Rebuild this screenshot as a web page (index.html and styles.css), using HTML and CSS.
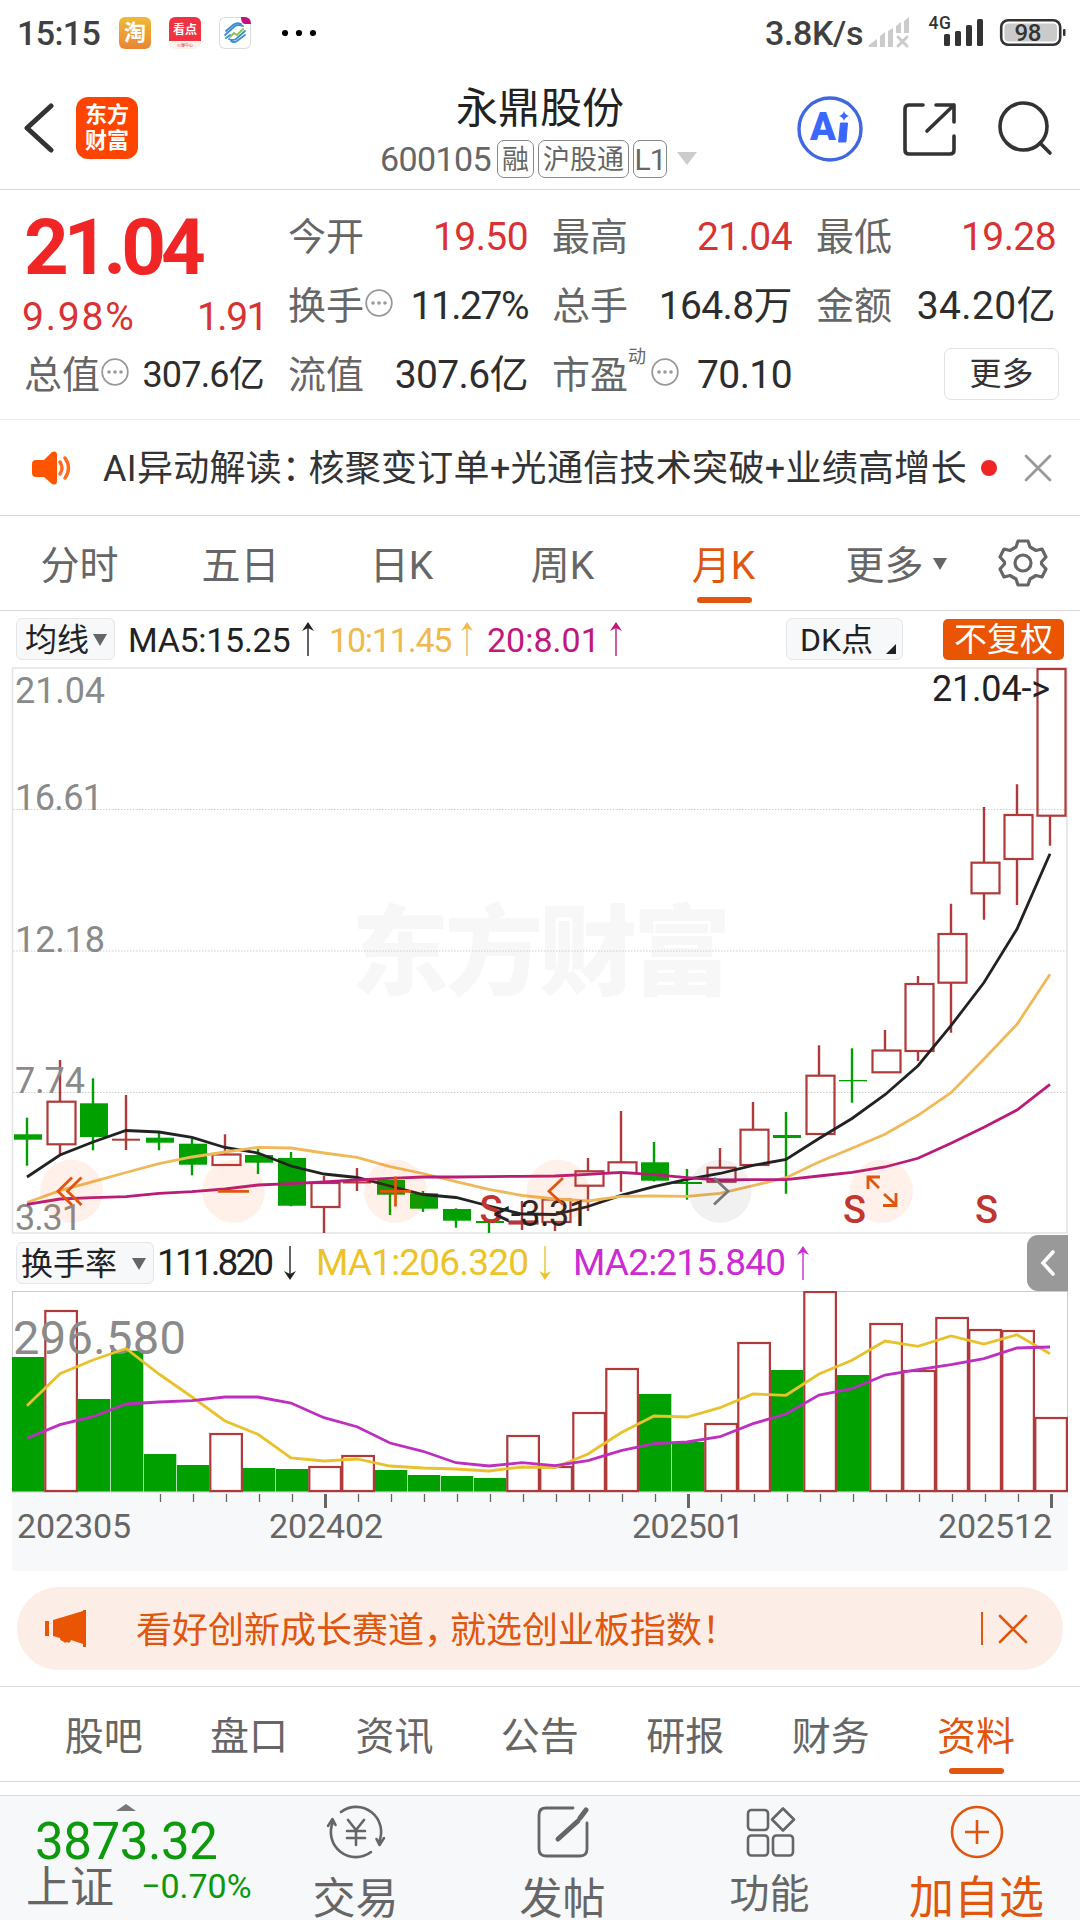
FILE: index.html
```html
<!DOCTYPE html>
<html lang="zh-CN">
<head>
  <meta charset="UTF-8">
  <meta name="viewport" content="width=device-width, initial-scale=1.0">
  <title>永鼎股份 600105</title>
  <link rel="stylesheet" href="styles.css">
</head>
<body>

  <div class="status-bar">
    <span class="time">15:15</span>
    <span class="app-icon taobao">淘</span>
    <span class="app-icon kandian"><b>看点</b><i>火爆中心</i></span>
    <span class="app-icon mobile">
      <svg width="32" height="32" viewBox="0 0 32 32">
        <path d="M22 0h5q5 0 5 6v1H26q-4 0-4-7z" fill="#c0137c"/>
        <g fill="none" stroke-width="1.800" stroke-linecap="round">
          <path d="M7 14l7-6q4-3 8-1M6 18l10-9q4-2 8 0M7 21l4-3" stroke="#3b8fd0"/>
          <path d="M11 20l4-4 3 2 6-6" stroke="#8cc152"/>
          <path d="M26 14l-9 8q-4 2-7 0M26 18l-8 6q-3 2-6 0" stroke="#3b8fd0"/>
        </g>
      </svg>
    </span>
    <svg class="dots" width="34" height="8" viewBox="0 0 34 8">
      <circle cx="3" cy="4" r="3.1"/><circle cx="17" cy="4" r="3.1"/><circle cx="31" cy="4" r="3.1"/>
    </svg>
    <span class="speed">3.8K/s</span>
    <svg class="system" width="204" height="34" viewBox="866 16 204 34">
      <g fill="#cbcbcb">
        <path d="M869 47v-2l8-6v8zM880 47V36l5-4v15zM888 47V31l5-3v19zM896 33v-7l5-4v11zM904 33V21l5-4v16z"/>
        <path d="M898 37l9 9M907 37l-9 9" stroke="#cbcbcb" stroke-width="3" stroke-linecap="round"/>
      </g>
      <text x="928.500" y="29" font-size="17.500" font-weight="500" textLength="22.500" fill="#333">4G</text>
      <g fill="#333">
        <rect x="944" y="34" width="6" height="12" rx="1.5"/>
        <rect x="955" y="31" width="6" height="15" rx="1.5"/>
        <rect x="966" y="25" width="6" height="21" rx="1.5"/>
        <rect x="977" y="19" width="6" height="27" rx="1.5"/>
        <rect x="1063" y="29" width="2.5" height="7" rx="1"/>
      </g>
      <rect x="1001.2" y="20.2" width="59" height="24.6" rx="7" fill="#fff" stroke="#333" stroke-width="2.6"/>
      <rect x="1004.5" y="23.5" width="52.5" height="18" rx="4" fill="#cacaca"/>
      <text x="1014.5" y="41" font-size="24" font-weight="500" textLength="27" fill="#333">98</text>
    </svg>
  </div>

  <header class="header">
    <svg class="back" width="32" height="52" viewBox="0 0 32 52"><path d="M29 4L5 26l24 22" fill="none" stroke="#333" stroke-width="5" stroke-linecap="round" stroke-linejoin="round"/></svg>
    <div class="logo">东方<br>财富</div>
    <div class="title">
      <div class="name">永鼎股份</div>
      <div class="code">
        <span class="num">600105</span>
        <span class="badge">融</span><span class="badge">沪股通</span><span class="badge level">L1</span>
        <svg width="20" height="13" viewBox="0 0 20 13"><path d="M0 0h20L10 13z" fill="#ccc"/></svg>
      </div>
    </div>
    <div class="actions">
      <svg width="66" height="68" viewBox="798 94 66 68">
        <circle cx="831" cy="128" r="31" fill="none" stroke="#3f68e0" stroke-width="3.4"/>
        <text x="811" y="139" class="ai-text">A</text>
        <path d="M841.500 122h7l-1.600 19h-7.300z" fill="#3a68ff" stroke="#3a68ff" stroke-width="1"/>
        <path d="M845 110q1 4 5 5-4 1-5 5-1-4-5-5 4-1 5-5z" fill="#3a68ff"/>
      </svg>
      <svg width="58" height="58" viewBox="901 99 58 58" fill="none" stroke="#333" stroke-width="3.6" stroke-linecap="round" stroke-linejoin="round">
        <path d="M924 104h-14q-4 0-4 4v41q0 4 4 4h41q4 0 4-4v-14M937 104h18v17M955 104l-27 26"/>
      </svg>
      <svg width="58" height="58" viewBox="995 99 58 58" fill="none" stroke="#333" stroke-width="3.6" stroke-linecap="round">
        <circle cx="1023.500" cy="125.500" r="23.500"/><path d="M1040 142l10 10"/>
      </svg>
    </div>
  </header>

  <section class="quote">
    <div class="price-cell">
      <div class="price">21.04</div>
      <div class="change"><span class="percent">9.98%</span><span class="diff">1.91</span></div>
    </div>
    <div class="item"><span>今开</span><b class="red">19.50</b></div>
    <div class="item"><span>最高</span><b class="red">21.04</b></div>
    <div class="item"><span>最低</span><b class="red">19.28</b></div>
    <div class="item"><span>换手<svg class="info" width="28" height="28" viewBox="0 0 28 28"><use href="#info"/></svg></span><b class="tight">11.27%</b></div>
    <div class="item"><span>总手</span><b>164.8万</b></div>
    <div class="item"><span>金额</span><b class="wide">34.20亿</b></div>
    <div class="item"><span>总值<svg class="info" width="28" height="28" viewBox="0 0 28 28"><use href="#info"/></svg></span><b class="small">307.6亿</b></div>
    <div class="item"><span>流值</span><b>307.6亿</b></div>
    <div class="item"><span>市盈<sup>动</sup><svg class="info" width="28" height="28" viewBox="0 0 28 28"><use href="#info"/></svg></span><b>70.10</b></div>
    <div class="item"><button class="more">更多</button></div>
  </section>

  <section class="news">
    <svg width="42" height="34" viewBox="0 0 42 34">
      <path d="M4 9h8L20 1q5-2 5 3v26q0 5-5 3l-8-7H4q-4 0-4-4v-9q0-4 4-4z" fill="#ff5500"/>
      <path d="M28 11q4 6 0 12M33 7q7 10 0 20" fill="none" stroke="#ff6a1f" stroke-width="3.4" stroke-linecap="round"/>
    </svg>
    <span class="news-text">AI异动解读<i class="punct">：</i>核聚变订单+光通信技术突破+业绩高增长</span>
    <i class="red-dot"></i>
    <svg width="28" height="28" viewBox="0 0 28 28"><path d="M2 2l24 24M26 2L2 26" stroke="#999" stroke-width="2.800" stroke-linecap="round"/></svg>
  </section>

  <nav class="period-tabs">
    <span>分时</span>
    <span>五日</span>
    <span>日K</span>
    <span>周K</span>
    <span class="active">月K</span>
    <span class="more-tab">更多<svg class="tab-caret" width="14" height="12" viewBox="0 0 14 12"><path d="M0 0h14L7 12z" fill="#666"/></svg></span>
    <span class="gear">
      <svg width="50" height="50" viewBox="-25 -25 50 50" fill="none" stroke="#666" stroke-width="3.2" stroke-linejoin="round">
        <path d="M-5-22H5l2 6 6 3.500 6-1.500 4 8-4.500 5v2l4.500 5-4 8-6-1.500-6 3.500-2 6H-5l-2-6-6-3.500-6 1.500-4-8 4.500-5v-2L-23-6l4-8 6 1.500 6-3.500z"/>
        <circle r="8"/>
      </svg>
    </span>
  </nav>

  <div class="ma-row">
    <span class="tag">均线<svg width="14" height="12" viewBox="0 0 14 12"><path d="M0 0h14L7 12z" fill="#666"/></svg></span>
    <span class="ma ma5">MA5:15.25</span>
    <svg class="arrow black" width="12" height="34" viewBox="0 0 12 34"><use href="#up"/></svg>
    <span class="ma ma10">10:11.45</span>
    <svg class="arrow amber" width="12" height="34" viewBox="0 0 12 34"><use href="#up"/></svg>
    <span class="ma ma20">20:8.01</span>
    <svg class="arrow rose" width="12" height="34" viewBox="0 0 12 34"><use href="#up"/></svg>
    <span class="tag dk">DK点<svg width="10" height="10" viewBox="0 0 10 10"><path d="M10 0v10H0z" fill="#222"/></svg></span>
    <span class="fuquan">不复权</span>
  </div>

  <svg id="price-chart" width="1080" height="568" viewBox="0 667 1080 568">
    <text class="watermark" x="351" y="987" textLength="380">东方财富</text>
    <path d="M13 809.500H1067M13 951H1067M13 1092.500H1067" stroke="#ccc" stroke-dasharray="1.500 1.500"/>
    <rect x="12.500" y="668" width="1054.500" height="565" fill="none" stroke="#e2e2e2" stroke-width="1.500"/>
    <g id="candles"></g>
    <g class="axis-label">
      <text x="15" y="703" textLength="90">21.04</text>
      <text x="15" y="810" textLength="88">16.61</text>
      <text x="15" y="952" textLength="90">12.18</text>
      <text x="15" y="1093" textLength="70">7.74</text>
      <text x="15" y="1230" textLength="67">3.31</text>
    </g>
    <g id="price-lines"></g>
    <g class="marks">
      <text x="491" y="1223">S</text>
      <text x="854.500" y="1223">S</text>
      <text x="986.500" y="1223">S</text>
    </g>
    <text class="extreme" x="932" y="701" textLength="118">21.04-&gt;</text>
    <text class="extreme" x="493" y="1226" textLength="96">&lt;-3.31</text>
    <g id="controls" fill="#ff5500" fill-opacity="0.085">
      <circle cx="71.500" cy="1191.300" r="31.500"/>
      <circle cx="233.500" cy="1191.300" r="31.500"/>
      <circle cx="395.500" cy="1191.300" r="31.500"/>
      <circle cx="558" cy="1191.300" r="31.500"/>
      <circle cx="720" cy="1191.300" r="31.500" fill="#000" fill-opacity="0.055"/>
      <circle cx="881.500" cy="1191.300" r="31.500"/>
    </g>
    <g fill="none" stroke="#e0560f" stroke-width="2.800">
      <path d="M72 1177.500l-14 13.800 14 13.800M81.500 1177.500l-14 13.800 14 13.800M218 1191.300h31M380 1191.300h31M395.500 1176.500v30M563 1178l-14 13.300 14 13.300"/>
      <path d="M714 1178l14 13.300-14 13.300" stroke="#777"/>
      <path d="M868 1189v-12h12M868 1177l11 11M896 1193v12.500h-13M896 1205l-12-11"/>
    </g>
  </svg>

  <div class="vol-row">
    <span class="tag">换手率<svg width="14" height="12" viewBox="0 0 14 12"><path d="M0 0h14L7 12z" fill="#666"/></svg></span>
    <span class="vol v0">111.820</span>
    <svg class="arrow black" width="12" height="36" viewBox="0 0 12 34"><use href="#down"/></svg>
    <span class="vol v1">MA1:206.320</span>
    <svg class="arrow gold" width="12" height="36" viewBox="0 0 12 34"><use href="#down"/></svg>
    <span class="vol v2">MA2:215.840</span>
    <svg class="arrow violet" width="12" height="36" viewBox="0 0 12 34"><use href="#up"/></svg>
    <span class="drawer"><svg width="16" height="28" viewBox="0 0 16 28"><path d="M13 3L3 14l10 11" fill="none" stroke="#fff" stroke-width="3.600" stroke-linecap="round"/></svg></span>
  </div>

  <svg id="vol-chart" width="1080" height="280" viewBox="0 1291 1080 280">
    <rect x="12" y="1492" width="1056" height="79" fill="#f7f8fa"/>
    <rect x="12.500" y="1291.500" width="1055" height="200.500" fill="none" stroke="#ccc"/>
    <g id="bars"></g>
    <text class="vol-max" x="13" y="1354" textLength="173">296.580</text>
    <g id="vol-lines"></g>
    <g id="ticks" stroke="#666"></g>
    <g class="date-label">
      <text x="17" y="1538" textLength="114">202305</text>
      <text x="269" y="1538" textLength="114">202402</text>
      <text x="632" y="1538" textLength="112">202501</text>
      <text x="938" y="1538" textLength="114">202512</text>
    </g>
  </svg>

  <div class="banner">
    <svg width="42" height="37" viewBox="0 0 42 37" fill="#ea5504"><path d="M0 11h4v15H0zM8 10L38 1V0h3v37h-3v-3l-12-4q-1 4-4 2-3 2-4-1-3 0-3-3l-7-2z"/></svg>
    <span class="banner-text">看好创新成长赛道<i class="punct">，</i>就选创业板指数！</span>
    <i class="bar"></i>
    <svg width="30" height="30" viewBox="0 0 30 30"><path d="M2 2l26 26M28 2L2 28" stroke="#e0560f" stroke-width="2.600" stroke-linecap="round"/></svg>
  </div>

  <nav class="info-tabs">
    <span>股吧</span>
    <span>盘口</span>
    <span>资讯</span>
    <span>公告</span>
    <span>研报</span>
    <span>财务</span>
    <span class="active">资料</span>
  </nav>

  <footer class="bottom">
    <div class="index">
      <svg class="index-caret" width="20" height="7" viewBox="0 0 20 7"><path d="M10 0l10 7H0z" fill="#777"/></svg>
      <div class="index-value">3873.32</div>
      <div class="index-name"><span>上证</span><em>−0.70%</em></div>
    </div>
    <div class="action">
      <svg width="60" height="54" viewBox="-30 -27 60 54" fill="none" stroke="#666" stroke-width="2.600" stroke-linecap="round" stroke-linejoin="round">
        <path d="M-15-20A25 25 0 0 1 23 10M28 6l-4.500 7-3-6M15 20A25 25 0 0 1-23-10M-28-6l4.500-7 3 6"/>
        <path d="M-8-12L0-2 8-12M0-2v15M-9-1H9M-9 6H9"/>
      </svg>
      <span>交易</span>
    </div>
    <div class="action">
      <svg width="54" height="54" viewBox="-27 -27 54 54" fill="none" stroke="#666" stroke-width="2.800" stroke-linecap="round">
        <path d="M10-24h-27q-7 0-7 7v34q0 7 7 7h34q7 0 7-7V-9"/>
        <path d="M23-22L17-14M15-11L-5 7" stroke-width="5"/>
      </svg>
      <span>发帖</span>
    </div>
    <div class="action short">
      <svg width="54" height="54" viewBox="-27 -27 54 54" fill="none" stroke="#666" stroke-width="2.600" stroke-linejoin="round">
        <rect x="-22" y="-22" width="20" height="20" rx="3.500"/>
        <rect x="-22" y="3.500" width="20" height="20" rx="3.500"/>
        <rect x="3" y="3.500" width="20" height="20" rx="3.500"/>
        <path d="M13-23.500L24-12.500 13-1.500 2-12.500z"/>
      </svg>
      <span>功能</span>
    </div>
    <div class="action add">
      <svg width="54" height="54" viewBox="-27 -27 54 54" fill="none" stroke="#e0560f" stroke-width="2.600"><circle r="25"/><path d="M-12 0h24M0-12v24"/></svg>
      <span>加自选</span>
    </div>
  </footer>

  <!-- shared symbols -->
  <svg class="defs" width="0" height="0">
    <symbol id="info" viewBox="0 0 28 28">
      <circle cx="14" cy="14" r="12.800" fill="none" stroke="#999" stroke-width="1.800"/>
      <circle cx="8" cy="14" r="1.800" fill="#999"/><circle cx="14" cy="14" r="1.800" fill="#999"/><circle cx="20" cy="14" r="1.800" fill="#999"/>
    </symbol>
    <symbol id="up" viewBox="0 0 12 34"><path d="M6 3v31" stroke="currentColor" stroke-width="1.400"/><path d="M6 0l6 9-6-3-6 3z" fill="currentColor"/></symbol>
    <symbol id="down" viewBox="0 0 12 34"><path d="M6 0v31" stroke="currentColor" stroke-width="1.400"/><path d="M6 34l6-9-6 3-6-3z" fill="currentColor"/></symbol>
  </svg>

  <script src="chart.js"></script>
</body>
</html>
```
FILE: styles.css
```css
* {
  box-sizing: border-box;
}

body {
  margin: 0;
  width: 1080px;
  height: 1920px;
  overflow: hidden;
  background: #fff;
  color: #333;
  font-family: Roboto, "Noto Sans CJK SC", sans-serif;
  line-height: 1.2;
}

svg {
  display: block;
  flex-shrink: 0;
}

.defs {
  position: absolute;
}

/* status bar */
.status-bar {
  display: flex;
  align-items: center;
  height: 66px;
  padding: 0 10px 0 17px;
}

.time {
  width: 102px;
  font-size: 34px;
  font-weight: 500;
  color: #404040;
  letter-spacing: -0.6px;
}

.app-icon {
  width: 32px;
  height: 32px;
  margin-right: 18px;
  border-radius: 6px;
  text-align: center;
  overflow: hidden;
}

.taobao {
  background: linear-gradient(#eebb35, #ea8535);
  color: #fff;
  font-size: 22px;
  font-weight: 700;
  line-height: 32px;
}

.kandian {
  background: linear-gradient(#ef3340 75%, #fff3ee 75%);
  color: #fff;
}

.kandian b {
  display: block;
  font-size: 12px;
  line-height: 27px;
}

.kandian i {
  display: block;
  font-size: 4px;
  line-height: 4px;
  color: #e03030;
  font-style: normal;
}

.mobile {
  box-shadow: inset 0 0 0 1px #ddd;
}

.dots {
  margin-left: 13px;
}

.speed {
  margin-left: auto;
  margin-right: 3px;
  font-size: 34px;
  font-weight: 500;
  color: #404040;
  letter-spacing: -0.4px;
}

/* header */
.header {
  display: flex;
  align-items: center;
  position: relative;
  height: 124px;
  padding: 0 27px 0 22px;
  border-bottom: 1.5px solid #d9d9d9;
}

.back {
  margin-top: 1px;
}

.logo {
  width: 62px;
  height: 62px;
  margin: 1px 0 0 22px;
  padding-top: 5px;
  border-radius: 12px;
  background: #ff4400;
  color: #fff;
  font-size: 22px;
  font-weight: 700;
  line-height: 26px;
  text-align: center;
}

.title {
  position: absolute;
  left: 0;
  right: 0;
  top: 15px;
  text-align: center;
}

.name {
  height: 55px;
  font-size: 42px;
  line-height: 56px;
  color: #222;
}

.code {
  display: flex;
  justify-content: center;
  align-items: center;
  gap: 4px;
  height: 45px;
  padding-right: 3px;
  color: #666;
}

.num {
  margin-right: 2px;
  padding-top: 1px;
  font-size: 34px;
  letter-spacing: -0.6px;
}

.badge {
  height: 38px;
  padding: 0 4px;
  border: 1.5px solid #888;
  border-radius: 7px;
  font-size: 27px;
  line-height: 38px;
}

.level {
  width: 34px;
  padding: 0;
  font-size: 30px;
  letter-spacing: -1px;
}

.code svg {
  margin-left: 6px;
}

.actions {
  display: flex;
  align-items: center;
  gap: 37px;
  margin: 2px 0 0 auto;
}

.ai-text {
  font-size: 38px;
  font-weight: 900;
  fill: #3a68ff;
}

/* quote */
.quote {
  display: grid;
  grid-template-columns: repeat(4, 240px);
  grid-template-rows: repeat(3, 69px);
  column-gap: 24px;
  height: 230px;
  padding: 13px 24px 0;
  border-bottom: 1.5px solid #e9e9e9;
}

.price-cell {
  grid-row: span 2;
}

.price {
  height: 91px;
  font-size: 78px;
  line-height: 89px;
  font-weight: 700;
  color: #f02525;
  letter-spacing: -5px;
}

.change {
  display: flex;
  justify-content: space-between;
  font-size: 39px;
  line-height: 46px;
  color: #d83232;
}

.percent {
  margin-left: -2px;
  letter-spacing: 1.8px;
}

.diff {
  letter-spacing: -1.5px;
  margin-right: -3px;
}

.item {
  display: flex;
  justify-content: space-between;
  align-items: center;
  white-space: nowrap;
}

.item span {
  position: relative;
  display: flex;
  font-size: 38px;
  color: #666;
}

.item b {
  font-size: 39px;
  font-weight: 400;
  color: #2d2d2d;
  letter-spacing: -0.6px;
}

.item b.red {
  color: #d83232;
}

.item b.tight {
  letter-spacing: -1.5px;
}

.item b.wide {
  letter-spacing: 0.4px;
}

.item b.small {
  font-size: 36px;
  letter-spacing: -0.8px;
}

.info {
  margin-top: 5px;
  margin-left: 1px;
}

.item sup {
  width: 22px;
  margin-top: -5px;
  font-size: 18px;
  line-height: 18px;
}

.more {
  width: 115px;
  height: 52px;
  margin-left: auto;
  margin-right: -3px;
  margin-top: -3px;
  padding: 0;
  border: 1.5px solid #e2e2e2;
  border-radius: 7px;
  background: #fff;
  color: #333;
  font-family: inherit;
  font-size: 32px;
  line-height: 50px;
}

/* news */
.news {
  display: flex;
  align-items: center;
  height: 96px;
  padding-left: 32px;
  border-bottom: 1.5px solid #d9d9d9;
}

.news-text {
  width: 877px;
  padding-left: 29px;
  padding-top: 5px;
  font-size: 36px;
  letter-spacing: 0.3px;
  white-space: nowrap;
}

.punct {
  font-style: normal;
  margin-right: -10px;
}

.red-dot {
  width: 16px;
  height: 16px;
  margin: 0 27px 0 30px;
  border-radius: 50%;
  background: #f02525;
}

/* tabs */
.period-tabs {
  display: flex;
  height: 95px;
  border-bottom: 1.5px solid #d9d9d9;
}

.period-tabs span,
.info-tabs span {
  display: flex;
  justify-content: center;
  align-items: center;
  position: relative;
  width: 161px;
  padding-top: 6px;
  font-size: 39px;
  color: #666;
}

.period-tabs span {
  padding-right: 2px;
}

.period-tabs .more-tab {
  width: 166px;
  padding-left: 16px;
  padding-right: 0;
}

.period-tabs .gear {
  width: 106px;
  padding: 0 2px 1px 0;
}

.tab-caret {
  margin: -4px 0 0 9px;
}

.period-tabs .active,
.info-tabs .active {
  color: #e0560f;
}

.active::after {
  content: "";
  position: absolute;
  left: 50%;
  bottom: 7px;
  width: 55px;
  height: 6px;
  margin-left: -27.5px;
  border-radius: 3px;
  background: #e0560f;
}

/* indicator rows */
.ma-row,
.vol-row {
  display: flex;
  align-items: center;
  padding-left: 16px;
  height: 56px;
  white-space: nowrap;
}

.tag {
  display: flex;
  align-items: center;
  gap: 4px;
  width: 99px;
  height: 42px;
  padding-left: 8px;
  padding-top: 2px;
  border: 1.5px solid #e4e6e8;
  border-radius: 6px;
  background: #f7f8fa;
  color: #222;
  font-size: 32px;
}

.vol-row .tag {
  width: 138px;
  gap: 15px;
  padding-left: 4px;
}

.ma {
  padding-top: 2px;
  font-size: 34px;
}

.ma5 {
  width: 174px;
  margin-left: 13px;
  color: #222;
  letter-spacing: -0.3px;
}

.ma10 {
  width: 132px;
  margin-left: 15px;
  color: #f0b84d;
  letter-spacing: -1.2px;
}

.ma20 {
  width: 123px;
  margin-left: 14px;
  color: #c0187c;
}

.tag.dk {
  width: 117px;
  margin-left: 164px;
  padding-left: 13px;
  gap: 13px;
}

.dk svg {
  margin-top: 18px;
}

.fuquan {
  width: 121px;
  height: 41px;
  margin-left: 40px;
  border-radius: 5px;
  background: #ea5504;
  color: #fff;
  font-size: 33px;
  line-height: 42px;
  text-align: center;
}

.black { color: #222; }
.amber { color: #f0b84d; }
.rose { color: #c0187c; }
.gold { color: #ecc32a; }
.violet { color: #cc2bd2; }

.vol {
  padding-top: 1px;
  font-size: 37px;
}

.v0 {
  width: 127px;
  margin-left: 3px;
  color: #222;
  letter-spacing: -2.9px;
}

.v1 {
  width: 223px;
  margin-left: 20px;
  color: #ecc32a;
  letter-spacing: -0.8px;
}

.v2 {
  width: 224px;
  margin-left: 22px;
  color: #cc2bd2;
  letter-spacing: -0.8px;
}

.drawer {
  display: flex;
  align-items: center;
  width: 41px;
  height: 56px;
  margin-left: auto;
  margin-right: 12px;
  padding-left: 13px;
  border-radius: 11px 0 0 11px;
  background: #999;
}

/* charts */
.watermark {
  font-size: 98px;
  font-weight: 900;
  fill: #f7f7f7;
}

.axis-label {
  font-size: 36px;
  fill: #8a8a8a;
}

.vol-max {
  font-size: 47px;
  fill: #8a8a8a;
}

.date-label {
  font-size: 34px;
  fill: #666;
}

.extreme {
  font-size: 36px;
  fill: #222;
}

.marks {
  font-size: 38px;
  font-weight: 500;
  fill: #c03530;
  text-anchor: middle;
}

/* banner */
.banner {
  display: flex;
  align-items: center;
  height: 83px;
  margin: 16px 17px;
  padding-left: 28px;
  border-radius: 42px;
  background: #fceee6;
  color: #e0560f;
}

.banner-text {
  width: 894px;
  padding-left: 49px;
  padding-top: 7px;
  font-size: 36px;
  white-space: nowrap;
}

.bar {
  width: 1.5px;
  height: 33px;
  margin-right: 15px;
  background: #e0560f;
}

.info-tabs {
  display: flex;
  height: 96px;
  padding: 0 31px;
  border-top: 1.5px solid #d9d9d9;
  border-bottom: 1.5px solid #d9d9d9;
}

.info-tabs span {
  width: 145.4px;
}

/* bottom bar */
.bottom {
  display: flex;
  height: 125px;
  margin-top: 13px;
  border-top: 1.5px solid #d9d9d9;
  background: #f7f8fa;
}

.index {
  width: 252px;
  padding-top: 8px;
}

.index-caret {
  margin-left: 116px;
}

.index-value {
  height: 54px;
  padding-left: 35px;
  font-size: 51px;
  line-height: 61px;
  color: #0c990c;
  letter-spacing: -0.4px;
}

.index-name {
  display: flex;
  align-items: center;
  height: 42px;
  padding-left: 26px;
  color: #666;
  font-size: 44px;
  white-space: nowrap;
}

.index-name span {
  padding-top: 4px;
}

.index-name em {
  margin-left: 27px;
  color: #0c990c;
  font-size: 34px;
  font-style: normal;
}

.action {
  display: flex;
  flex-direction: column;
  align-items: center;
  width: 207px;
  padding-top: 9px;
  color: #666;
  font-size: 43px;
}

.action span {
  margin-top: 13px;
  line-height: 54px;
}

.action.short {
  font-size: 40px;
}

.action.short span {
  margin-top: 9px;
}

.action.add {
  color: #e0560f;
  font-size: 45px;
}
```
FILE: chart.js
```js
const RED = '#b03a3a';
const GREEN = '#00a000';
const STEP = 33;

// [up/down, high, body top, body bottom, low]
const candles = [
  ['d', 1117.7, 1134.3, 1139.7, 1165.7],
  ['u', 1060, 1101.7, 1144.3, 1154],
  ['d', 1078.3, 1103.3, 1137, 1150.3],
  ['u', 1095, 1139.7, 1139.7, 1150],
  ['d', 1131.7, 1137.7, 1142.7, 1150.3],
  ['d', 1138.3, 1143.7, 1164.7, 1175.3],
  ['u', 1134.3, 1154.5, 1165, 1165],
  ['d', 1148.3, 1155, 1162.7, 1174],
  ['d', 1152, 1158, 1205.7, 1206.3],
  ['u', 1176, 1183, 1207, 1233],
  ['u', 1168, 1182.5, 1182.5, 1191],
  ['d', 1180, 1180, 1194.7, 1215],
  ['d', 1191, 1193.3, 1208.7, 1212],
  ['d', 1208.3, 1209, 1220.7, 1227.7],
  ['d', 1220, 1221, 1223, 1233],
  ['u', 1201, 1221.5, 1223.5, 1230],
  ['u', 1199, 1199.5, 1222, 1231],
  ['u', 1158, 1171.3, 1185.7, 1211],
  ['u', 1111, 1162.3, 1173, 1191.7],
  ['d', 1142, 1162.3, 1180.7, 1181.5],
  ['d', 1169, 1182, 1184, 1199.7],
  ['u', 1148, 1167.7, 1181.7, 1181.7],
  ['u', 1102, 1129.7, 1165, 1165],
  ['d', 1112, 1135, 1138, 1193.7],
  ['u', 1045.3, 1075.7, 1134, 1134],
  ['d', 1048.3, 1080, 1081.3, 1102.7],
  ['u', 1030, 1050.5, 1072.3, 1072.3],
  ['u', 976, 984, 1051, 1061],
  ['u', 903.7, 934, 982.7, 1032.7],
  ['u', 807, 862.7, 893.3, 919.7],
  ['u', 784.3, 815, 859, 905],
  ['u', 669, 669, 815.7, 845.7]
];

const ma5 = [1177, 1155, 1142, 1130.5, 1132, 1137.3, 1147.5, 1153, 1166, 1174, 1177.5, 1186, 1194.5, 1197.5, 1206, 1214, 1214.5, 1206.5, 1195.3, 1186.7, 1179.3, 1173.5, 1165.3, 1159.5, 1138.5, 1118.5, 1094.7, 1065.7, 1025.7, 982.5, 929, 853.7];
const ma10 = [1202.5, 1190.7, 1181.7, 1172.5, 1163.7, 1157, 1152, 1147.3, 1148, 1153, 1157.3, 1166.7, 1173.5, 1181.7, 1189.3, 1195.5, 1199, 1201, 1196.3, 1196, 1196.3, 1193.3, 1185.7, 1177.7, 1162, 1148.3, 1134.3, 1115.3, 1092.7, 1059, 1024.3, 974.3];
const ma20 = [1204.3, 1199, 1197.7, 1196.7, 1193.3, 1191.7, 1189, 1185, 1183.7, 1182, 1180, 1178.3, 1177, 1177, 1176.7, 1176.3, 1176, 1174.3, 1172.3, 1174.7, 1177.7, 1180, 1179.7, 1179.7, 1176, 1172.3, 1167, 1158.3, 1143.3, 1127.3, 1110, 1084.3];

// top edge of every turnover bar
const bars = [
  ['d', 1357], ['u', 1311], ['d', 1399], ['d', 1350.7], ['d', 1454], ['d', 1465], ['u', 1434], ['d', 1468],
  ['d', 1469], ['u', 1467], ['u', 1456], ['d', 1470], ['d', 1475], ['d', 1476], ['d', 1478], ['u', 1436],
  ['u', 1467], ['u', 1413], ['u', 1369], ['d', 1394], ['d', 1442], ['u', 1424], ['u', 1343], ['d', 1370],
  ['u', 1292], ['d', 1375], ['u', 1324], ['u', 1371], ['u', 1318], ['u', 1330], ['u', 1331], ['u', 1418]
];

const vma1 = [1405.7, 1373.7, 1360, 1348.5, 1374, 1397, 1421, 1434.3, 1458, 1461, 1459, 1466, 1468, 1469, 1471, 1467, 1467.5, 1454, 1432.7, 1416, 1417, 1407.7, 1394, 1395.3, 1374, 1360.3, 1341, 1346.3, 1336, 1344, 1334.7, 1353.7];
const vma2 = [1438.3, 1424.7, 1416.7, 1404, 1402, 1400.7, 1397, 1397, 1403, 1417.7, 1426.7, 1443, 1451.3, 1462.7, 1466, 1462.7, 1465.7, 1460.7, 1450.7, 1443.7, 1442, 1436.7, 1423.7, 1414, 1395, 1388.7, 1375, 1369.7, 1364.7, 1358.7, 1348, 1347];

function candle([dir, high, top, bottom, low], i) {
  const x = 27 + STEP * i;
  if (dir === 'd') {
    return `<path d="M${x} ${high}V${low}" stroke="${GREEN}" stroke-width="2.4"/>
      <rect x="${x - 13}" y="${top}" width="28" height="${bottom - top}" fill="${GREEN}"/>`;
  }
  const body = bottom - top < 1
    ? `<path d="M${x - 14} ${top}h28" stroke="${RED}" stroke-width="2"/>`
    : `<rect x="${x - 12.5}" y="${top}" width="28" height="${bottom - top}" fill="none" stroke="${RED}" stroke-width="2.2"/>`;
  return `<path d="M${x} ${high}V${top}M${x} ${bottom}V${low}" stroke="${RED}" stroke-width="2.4"/>` + body;
}

function line(values, color) {
  const points = values.map((y, i) => `${27 + STEP * i},${y}`).join(' ');
  return `<polyline points="${points}" fill="none" stroke="${color}" stroke-width="2.8"/>`;
}

function bar([dir, top], i) {
  const x = 12 + STEP * i;
  return dir === 'd'
    ? `<rect x="${x}" y="${top}" width="32.3" height="${1491.5 - top}" fill="${GREEN}"/>`
    : `<rect x="${x + 0.3}" y="${top}" width="31.6" height="${1491 - top}" fill="#fff" stroke="${RED}" stroke-width="2.2"/>`;
}

document.getElementById('candles').innerHTML = candles.map(candle).join('');
document.getElementById('price-lines').innerHTML = line(ma5, '#222') + line(ma10, '#efb95a') + line(ma20, '#b81c78');
document.getElementById('bars').innerHTML = bars.map(bar).join('');
document.getElementById('vol-lines').innerHTML = line(vma1, '#e8c12c') + line(vma2, '#bd30bf');

let ticks = '';
for (let i = 4; i < 32; i++) {
  const major = i === 9 || i === 20 || i === 31;
  ticks += `<path d="M${28.5 + STEP * i} 1494v${major ? 14 : 8}" stroke-width="${major ? 3 : 1.3}"/>`;
}
document.getElementById('ticks').innerHTML = ticks;
```
